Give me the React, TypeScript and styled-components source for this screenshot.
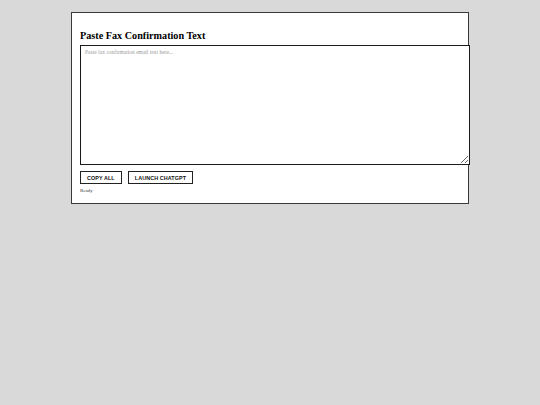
import styled, { createGlobalStyle } from "styled-components";

const GlobalStyle = createGlobalStyle`
  html, body {
    margin: 0;
    padding: 0;
    background: #d9d9d9;
  }
`;

const SPage = styled.main`
  padding-top: 12px;
  display: flex;
  justify-content: center;
`;

const SPanel = styled.section`
  width: 380px;
  padding: 8px 8px 10px;
  background: #ffffff;
  border: 1px solid #3a3a3a;
  font-family: "Liberation Serif", "Times New Roman", serif;
`;

const STitle = styled.h2`
  margin: 9px 0 4px;
  font-size: 10.2px;
  font-weight: 700;
  color: #000;
`;

const STextArea = styled.textarea`
  display: block;
  width: 100%;
  height: 112px;
  margin: 0 0 6px;
  padding: 3px 4px;
  border: 1px solid #1a1a1a;
  border-radius: 0;
  background: #fff;
  font-family: "Liberation Serif", "Times New Roman", serif;
  font-size: 5.5px;
  color: #000;
  resize: both;
  outline: none;

  &::placeholder {
    color: #9a9a9a;
  }
`;

const SActions = styled.div`
  display: flex;
  gap: 6px;
`;

const SButton = styled.button`
  height: 13px;
  padding: 0 6px;
  border: 1px solid #222;
  border-radius: 0;
  background: #fff;
  color: #111;
  font-family: "Liberation Sans", Arial, sans-serif;
  font-size: 5.4px;
  font-weight: 700;
  letter-spacing: 0.1px;
  text-transform: uppercase;
  cursor: pointer;
`;

const SStatus = styled.div`
  margin-top: 4px;
  font-size: 5px;
  color: #333;
`;

const App = () => {
  return (
    <>
      <GlobalStyle />
      <SPage>
        <SPanel>
          <STitle>Paste Fax Confirmation Text</STitle>
          <STextArea placeholder="Paste fax confirmation email text here..." />
          <SActions>
            <SButton>Copy All</SButton>
            <SButton>Launch ChatGPT</SButton>
          </SActions>
          <SStatus>Ready</SStatus>
        </SPanel>
      </SPage>
    </>
  );
};

export default App;
